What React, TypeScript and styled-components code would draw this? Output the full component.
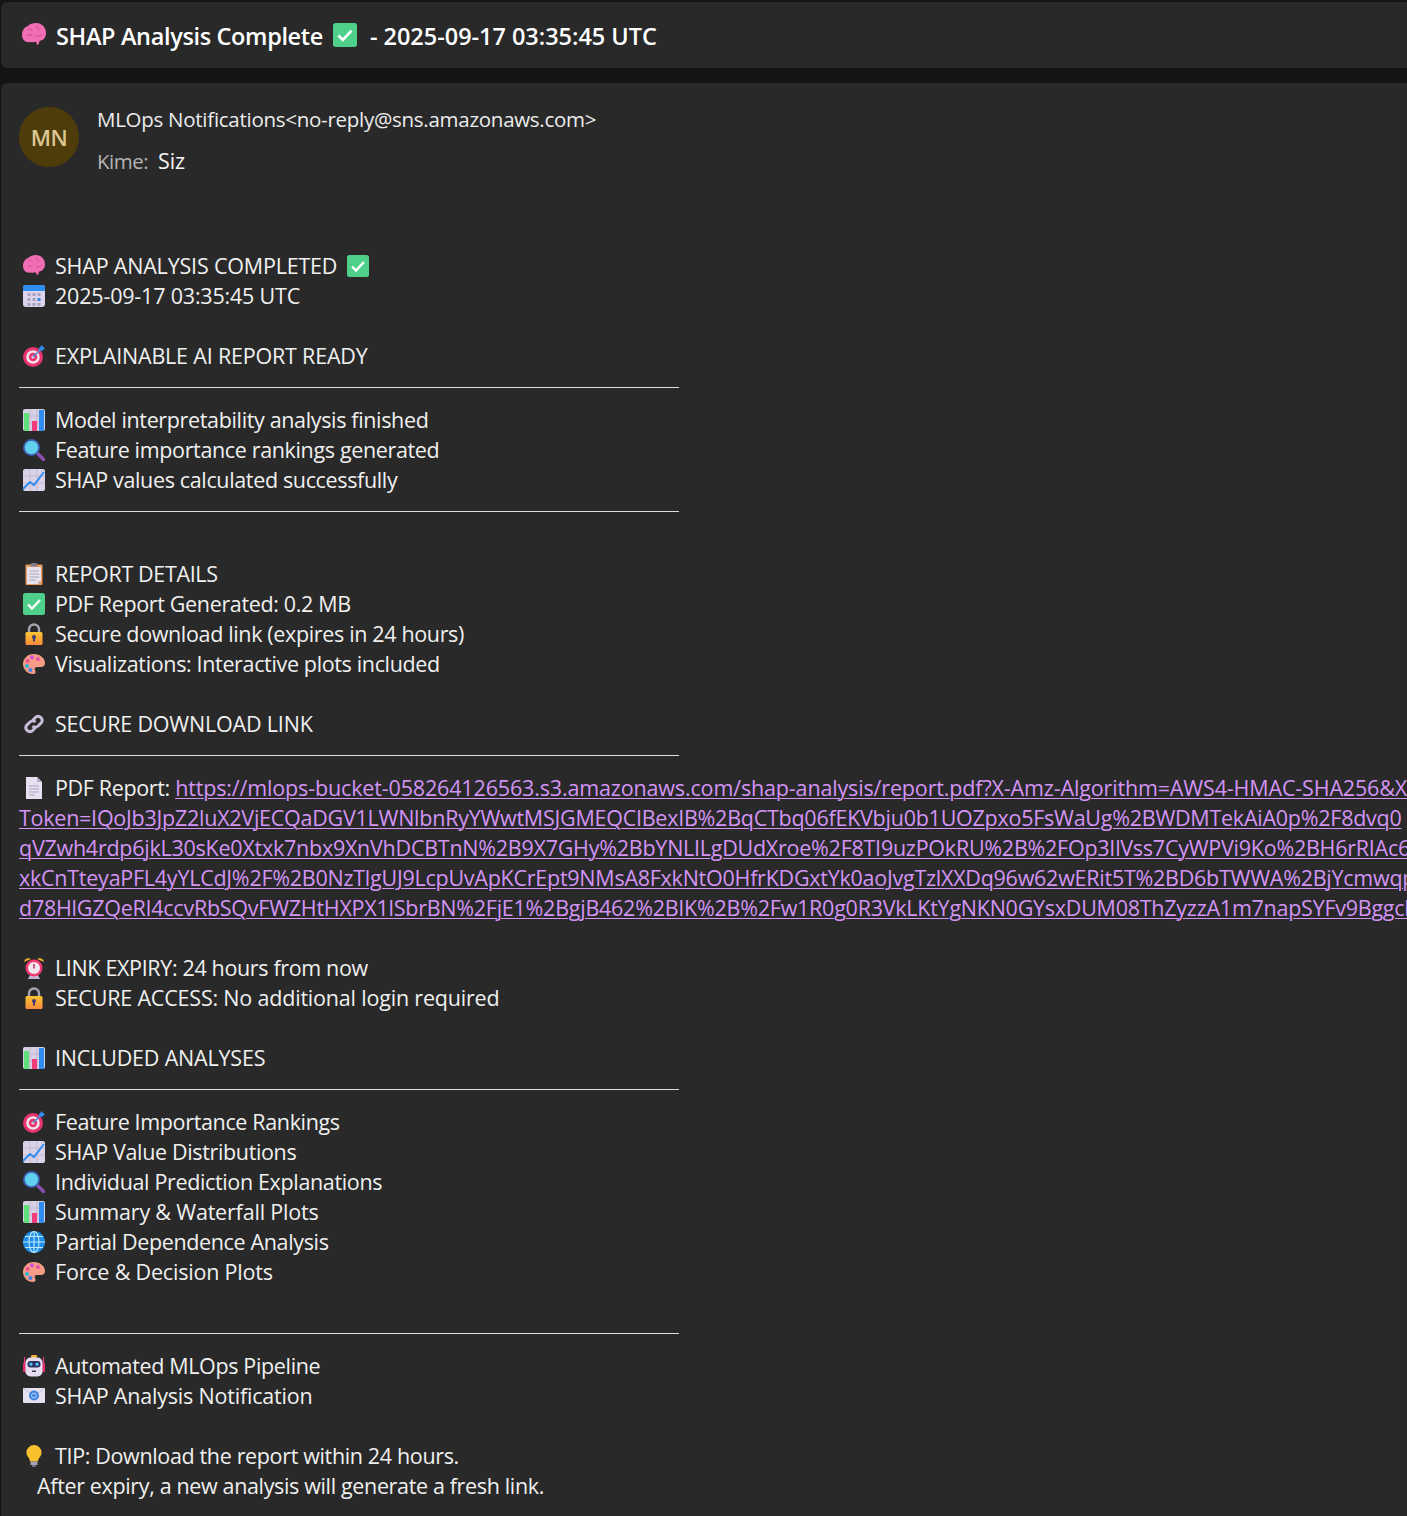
import React from 'react';
import styled, { createGlobalStyle, css } from 'styled-components';

const GlobalStyle = createGlobalStyle`
  html, body {
    margin: 0;
    padding: 0;
    height: 1516px;
    overflow: hidden;
    background: #141414;
  }
  body {
    font-family: "Open Sans", "Noto Sans", "Liberation Sans", sans-serif;
  }
`;

const Page = styled.div`
  display: flex;
  flex-direction: column;
  gap: 15px;
  width: 1407px;
  height: 1516px;
  padding: 2px 0 0 1px;
  overflow: hidden;
  box-sizing: border-box;
`;

const SubjectBar = styled.header`
  display: flex;
  align-items: center;
  gap: 10px;
  height: 66px;
  padding-left: 21px;
  background: #292929;
  border-radius: 6px 0 0 6px;
  box-sizing: border-box;
  flex-shrink: 0;
`;

const SubjectText = styled.h1`
  margin: 0;
  padding-top: 2px;
  font-size: 23.5px;
  font-weight: 600;
  letter-spacing: -0.35px;
  color: #ffffff;
  white-space: pre;
`;

const SubjectDate = styled(SubjectText)`
  margin-left: 3px;
  letter-spacing: -0.03px;
`;

const MessageCard = styled.article`
  flex: 1;
  min-width: 0;
  padding: 24px 0 0 18px;
  background: #292929;
  border-radius: 6px 0 0 0;
  box-sizing: border-box;
  overflow: hidden;
`;

const Sender = styled.div`
  display: flex;
  gap: 18px;
  height: 144px;
`;

const Avatar = styled.div`
  display: flex;
  align-items: center;
  justify-content: center;
  width: 60px;
  height: 60px;
  border-radius: 50%;
  background: #4f3c0b;
  color: #dcc793;
  font-size: 22px;
  font-weight: 600;
  letter-spacing: -0.4px;
`;

const SenderLines = styled.div`
  display: flex;
  flex-direction: column;
  gap: 14px;
  margin-top: -1px;
`;

const SenderName = styled.div`
  height: 26px;
  line-height: 26px;
  font-size: 20.5px;
  letter-spacing: -0.27px;
  color: #ececec;
`;

const Recipient = styled.div`
  display: flex;
  gap: 10px;
  height: 30px;
  line-height: 30px;
  font-size: 20.5px;
  letter-spacing: -0.5px;
`;

const RecipientLabel = styled.span`
  color: #b4b4b4;
`;

const RecipientName = styled.span`
  color: #f4f4f4;
  font-size: 21.5px;
  letter-spacing: -0.2px;
`;

const lineText = css`
  font-size: 21.5px;
  line-height: 30px;
  letter-spacing: -0.35px;
  color: #f0f0f0;
  white-space: pre;
`;

const Row = styled.div<{ $heading?: boolean }>`
  ${lineText}
  display: flex;
  align-items: center;
  gap: 10px;
  height: 30px;
  padding-left: 4px;
  ${p => p.$heading && 'letter-spacing: -0.19px;'}
`;

const Blank = styled.div`
  height: 30px;
`;

const Continuation = styled.div`
  ${lineText}
  height: 30px;
  padding-left: 18px;
`;

const Rule = styled.hr`
  width: 660px;
  height: 1px;
  margin: 16px 0 17px;
  border: 0;
  background: #dcdcdc;
`;

const ReportLink = styled.a`
  ${lineText}
  color: #d394f5;
  text-decoration: underline;
  text-underline-offset: 2px;
  text-decoration-thickness: 1px;
  letter-spacing: -0.25px;
`;

const FirstReportLink = styled(ReportLink)`
  letter-spacing: -0.15px;
`;

const LinkLine = styled.div`
  height: 30px;
  white-space: pre;
`;

const IconBox = styled.svg<{ $size?: number }>`
  width: ${p => p.$size ?? 22}px;
  height: ${p => p.$size ?? 22}px;
  flex-shrink: 0;
  display: block;
`;

type IconName =
  | 'brain' | 'calendar' | 'target' | 'bars' | 'search' | 'trend' | 'clipboard' | 'check'
  | 'lock' | 'palette' | 'chain' | 'page' | 'alarm' | 'globe' | 'robot' | 'mail' | 'bulb';

const glyphs: Record<IconName, React.ReactNode> = {
  brain: (
    <>
      <path d="M0 11C0 7 2 4 5 3C7 1 10 0 13 0C18 0 22 4 22 9C22 13 20 16 16 16.5L15.5 19L14 20.5L13 17.5C11 17.5 10 18 8 17.5C3 18.5 0 15 0 11z" fill="#f06eb4" />
      <path d="M5 6c2-1 3.5-.5 4.5 1M12 3.5c2 0 3.5 1 3.5 3.5M4.5 12c1.5-1.5 4-1.5 5 0M13 12c2 .5 4 0 5-1.5" stroke="#d4509a" strokeWidth="1" fill="none" />
    </>
  ),
  calendar: (
    <>
      <rect x="0" y="0" width="22" height="22" rx="3" fill="#dcd3ec" />
      <path d="M0 6V3a3 3 0 0 1 3-3h16a3 3 0 0 1 3 3v3z" fill="#2f8cf0" />
      {[4, 9, 14].map(y => [4, 9, 14].map(x => (
        <rect key={`${x}-${y}`} x={x + 0.5} y={y + 4} width="3" height="3" fill={x === 14 && y === 9 ? '#2f8cf0' : '#a9a3ba'} />
      )))}
    </>
  ),
  target: (
    <>
      <circle cx="10" cy="12" r="10" fill="#e8336f" />
      <circle cx="10" cy="12" r="6.8" fill="#f3dfe8" />
      <circle cx="10" cy="12" r="4.2" fill="#e8336f" />
      <circle cx="10" cy="12" r="1.6" fill="#f3dfe8" />
      <path d="M10 12 19 3" stroke="#4a8fd8" strokeWidth="1.6" />
      <path d="M16 3l3-3 1 2 2 1-3 3-3-1z" fill="#2f8cf0" />
    </>
  ),
  bars: (
    <>
      <rect x="0" y="0" width="22" height="22" rx="2" fill="#d8d0e4" />
      <path d="M0 7h22M0 14h22M7 0v22M14 0v22" stroke="#b7afc6" strokeWidth="0.7" />
      <rect x="1" y="4" width="5" height="18" fill="#5fe07a" />
      <rect x="9" y="12" width="5" height="10" fill="#ef3d7c" />
      <rect x="16" y="1" width="5" height="21" fill="#2f8cf0" />
    </>
  ),
  search: (
    <>
      <path d="M13 13l8 8" stroke="#8a4fb0" strokeWidth="3.4" strokeLinecap="round" />
      <circle cx="8.5" cy="8.5" r="8.5" fill="#3b5bb0" />
      <circle cx="8.5" cy="8.5" r="6.8" fill="#5fd0ee" />
    </>
  ),
  trend: (
    <>
      <rect x="0" y="0" width="22" height="22" rx="2" fill="#dad2e6" />
      <path d="M0 7h22M0 14h22M7 0v22M14 0v22" stroke="#bdb5cb" strokeWidth="0.7" />
      <path d="M0 20l7-7 4 3L21 3" stroke="#2f8cf0" strokeWidth="2" fill="none" />
    </>
  ),
  clipboard: (
    <>
      <rect x="2.5" y="1.5" width="17" height="20.5" rx="1" fill="#e69a5c" />
      <path d="M4 4h14v14l-3 3H4z" fill="#e8e2ee" />
      <path d="M15 21v-3h3z" fill="#bdb5c8" />
      <path d="M6 8h10M6 11h10M6 14h10M6 17h7" stroke="#aaa3b8" strokeWidth="1.1" />
      <rect x="8" y="0" width="6" height="3.6" rx="1" fill="#7f7a8c" />
    </>
  ),
  check: (
    <>
      <rect x="0" y="0" width="22" height="22" rx="2.5" fill="#4fd08a" />
      <path d="M5 11.5l4 4 8-8.5" stroke="#fff" strokeWidth="2.4" fill="none" />
    </>
  ),
  lock: (
    <>
      <path d="M6 10V6.5a5 5 0 0 1 10 0V10" stroke="#a8a2b0" strokeWidth="2.4" fill="none" />
      <defs>
        <linearGradient id="lockFill" x1="0" y1="0" x2="0" y2="1">
          <stop offset="0" stopColor="#fbc531" />
          <stop offset="1" stopColor="#f98a3c" />
        </linearGradient>
      </defs>
      <rect x="2.5" y="9" width="17" height="13" rx="1.5" fill="url(#lockFill)" />
      <circle cx="11" cy="14" r="2" fill="#3f3a70" />
      <rect x="10" y="14" width="2" height="4.5" fill="#3f3a70" />
    </>
  ),
  palette: (
    <>
      <path d="M11 1C4 1 0 6 0 11s4 10 10 10c3 0 3-2 2-4-1-2 0-3 3-3h3c3 0 4-2 4-4C22 5 17 1 11 1z" fill="#f59c86" />
      <circle cx="9" cy="4.5" r="2" fill="#d24fe0" />
      <circle cx="4.5" cy="8" r="2" fill="#f04f8f" />
      <circle cx="4" cy="13" r="2" fill="#27b7d8" />
      <circle cx="7.5" cy="17" r="2" fill="#3f7fe8" />
      <circle cx="15" cy="6" r="2" fill="#e84fb0" />
    </>
  ),
  chain: (
    <>
      <path d="M9.5 7.5l3.5-3.5a4 4 0 0 1 5.5 5.5l-3.5 3.5a4 4 0 0 1-5.5 0" stroke="#c9bcda" strokeWidth="3" fill="none" />
      <path d="M12.5 14.5L9 18a4 4 0 0 1-5.500-5.500L7 9a4 4 0 0 1 5.500 0" stroke="#c9bcda" strokeWidth="3" fill="none" />
    </>
  ),
  page: (
    <>
      <path d="M3 0h11l5 5v17H3z" fill="#e8e0f2" />
      <path d="M14 0v5h5z" fill="#b6adc6" />
      <path d="M6 9h10M6 12h10M6 15h10M6 18h6" stroke="#a9a3b6" strokeWidth="1" />
    </>
  ),
  alarm: (
    <>
      <path d="M1 5a4.5 4.5 0 0 1 7-3zM21 5a4.5 4.5 0 0 0-7-3z" fill="#f2b233" />
      <path d="M5 22h12l-2-4H7z" fill="#c5b8d6" />
      <circle cx="11" cy="11" r="8.5" fill="#f2386f" />
      <circle cx="11" cy="11" r="6" fill="#f3e6ee" />
      <path d="M11 7v4.5" stroke="#c92a5a" strokeWidth="1.5" />
    </>
  ),
  globe: (
    <>
      <circle cx="11" cy="11" r="11" fill="#1f8ee8" />
      <path d="M0 11h22M2 5.5h18M2 16.5h18M11 0v22" stroke="#bfe6fa" strokeWidth="1.1" fill="none" />
      <ellipse cx="11" cy="11" rx="5" ry="10.5" stroke="#bfe6fa" strokeWidth="1.1" fill="none" />
    </>
  ),
  robot: (
    <>
      <rect x="8" y="0" width="6" height="3" rx="1" fill="#f2b233" />
      <path d="M1.5 2v8M20.5 2v8" stroke="#ef3d7c" strokeWidth="1.2" />
      <rect x="0" y="8" width="3" height="9" rx="1" fill="#e0306f" />
      <rect x="19" y="8" width="3" height="9" rx="1" fill="#e0306f" />
      <rect x="2.5" y="2.5" width="17" height="19" rx="5" fill="#e6dcf0" />
      <rect x="4.5" y="6" width="13" height="6.5" rx="3" fill="#2a3360" />
      <circle cx="8" cy="9.2" r="1.6" fill="#4fc4f4" />
      <circle cx="14" cy="9.2" r="1.6" fill="#4fc4f4" />
      <rect x="9" y="15.5" width="4" height="1.5" fill="#3a3550" />
    </>
  ),
  mail: (
    <>
      <rect x="0" y="3" width="22" height="15" rx="1" fill="#e6dff0" />
      <path d="M0 3l11 8 11-8" stroke="#c8bfd6" strokeWidth="0.8" fill="none" />
      <circle cx="11" cy="10.5" r="5" fill="#3f86e0" />
      <circle cx="11" cy="10.5" r="2.4" stroke="#bcd8f6" strokeWidth="1" fill="none" />
    </>
  ),
  bulb: (
    <>
      <path d="M11 0a7.6 7.6 0 0 0-7.6 7.6c0 3 2 4.6 3 6.4.5 1 .6 2 .6 2.5h8c0-.5.1-1.5.6-2.5 1-1.8 3-3.4 3-6.4A7.6 7.6 0 0 0 11 0z" fill="#fbc02d" />
      <rect x="7.5" y="16.5" width="7" height="3.5" fill="#a8a2b4" />
      <rect x="9" y="20" width="4" height="2" fill="#6f6a7c" />
    </>
  ),
};

const Icon: React.FC<{ name: IconName; size?: number }> = ({ name, size }) => (
  <IconBox $size={size} viewBox="0 0 22 22" aria-hidden="true">{glyphs[name]}</IconBox>
);

const Line: React.FC<{ icon: IconName; heading?: boolean; children: React.ReactNode }> = ({ icon, heading, children }) => (
  <Row $heading={heading}>
    <Icon name={icon} />
    <span>{children}</span>
  </Row>
);

const urlLines = [
  'Token=IQoJb3JpZ2luX2VjECQaDGV1LWNlbnRyYWwtMSJGMEQCIBexIB%2BqCTbq06fEKVbju0b1UOZpxo5FsWaUg%2BWDMTekAiA0p%2F8dvq0',
  'qVZwh4rdp6jkL30sKe0Xtxk7nbx9XnVhDCBTnN%2B9X7GHy%2BbYNLILgDUdXroe%2F8TI9uzPOkRU%2B%2FOp3IlVss7CyWPVi9Ko%2BH6rRIAc6M',
  'xkCnTteyaPFL4yYLCdJ%2F%2B0NzTlgUJ9LcpUvApKCrEpt9NMsA8FxkNtO0HfrKDGxtYk0aoJvgTzlXXDq96w62wERit5T%2BD6bTWWA%2BjYcmwqp',
  'd78HlGZQeRI4ccvRbSQvFWZHtHXPX1lSbrBN%2FjE1%2BgjB462%2BIK%2B%2Fw1R0g0R3VkLKtYgNKN0GYsxDUM08ThZyzzA1m7napSYFv9Bggcl',
];

const App: React.FC = () => (
  <>
    <GlobalStyle />
    <Page>
      <SubjectBar>
        <Icon name="brain" size={24} />
        <SubjectText>SHAP Analysis Complete</SubjectText>
        <Icon name="check" size={24} />
        <SubjectDate>- 2025-09-17 03:35:45 UTC</SubjectDate>
      </SubjectBar>
      <MessageCard>
        <Sender>
          <Avatar>MN</Avatar>
          <SenderLines>
            <SenderName>MLOps Notifications&lt;no-reply@sns.amazonaws.com&gt;</SenderName>
            <Recipient>
              <RecipientLabel>Kime:</RecipientLabel>
              <RecipientName>Siz</RecipientName>
            </Recipient>
          </SenderLines>
        </Sender>

        <Row $heading>
          <Icon name="brain" />
          <span>SHAP ANALYSIS COMPLETED</span>
          <Icon name="check" />
        </Row>
        <Line icon="calendar" heading>2025-09-17 03:35:45 UTC</Line>
        <Blank />
        <Line icon="target" heading>EXPLAINABLE AI REPORT READY</Line>
        <Rule />
        <Line icon="bars">Model interpretability analysis finished</Line>
        <Line icon="search">Feature importance rankings generated</Line>
        <Line icon="trend">SHAP values calculated successfully</Line>
        <Rule />
        <Blank />
        <Line icon="clipboard">REPORT DETAILS</Line>
        <Line icon="check">PDF Report Generated: 0.2 MB</Line>
        <Line icon="lock">Secure download link (expires in 24 hours)</Line>
        <Line icon="palette">Visualizations: Interactive plots included</Line>
        <Blank />
        <Line icon="chain" heading>SECURE DOWNLOAD LINK</Line>
        <Rule />
        <Line icon="page">
          PDF Report:{' '}
          <FirstReportLink href="#report">https://mlops-bucket-058264126563.s3.amazonaws.com/shap-analysis/report.pdf?X-Amz-Algorithm=AWS4-HMAC-SHA256&amp;X</FirstReportLink>
        </Line>
        {urlLines.map(text => (
          <LinkLine key={text}>
            <ReportLink href="#report">{text}</ReportLink>
          </LinkLine>
        ))}
        <Blank />
        <Line icon="alarm">LINK EXPIRY: 24 hours from now</Line>
        <Line icon="lock" heading>SECURE ACCESS: No additional login required</Line>
        <Blank />
        <Line icon="bars" heading>INCLUDED ANALYSES</Line>
        <Rule />
        <Line icon="target">Feature Importance Rankings</Line>
        <Line icon="trend">SHAP Value Distributions</Line>
        <Line icon="search">Individual Prediction Explanations</Line>
        <Line icon="bars" heading>Summary &amp; Waterfall Plots</Line>
        <Line icon="globe">Partial Dependence Analysis</Line>
        <Line icon="palette" heading>Force &amp; Decision Plots</Line>
        <Blank />
        <Rule />
        <Line icon="robot">Automated MLOps Pipeline</Line>
        <Line icon="mail" heading>SHAP Analysis Notification</Line>
        <Blank />
        <Line icon="bulb">TIP: Download the report within 24 hours.</Line>
        <Continuation>After expiry, a new analysis will generate a fresh link.</Continuation>
      </MessageCard>
    </Page>
  </>
);

export default App;
